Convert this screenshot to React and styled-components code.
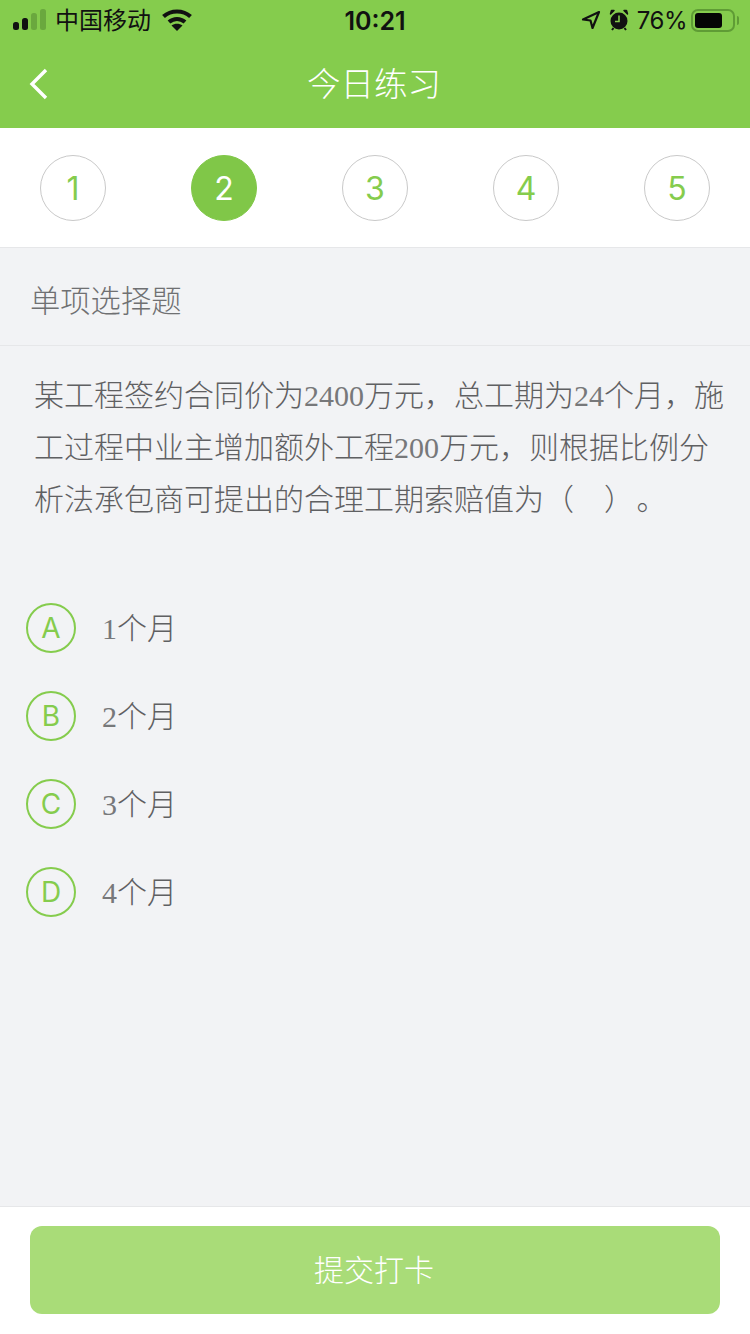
import React from 'react';
import styled, { createGlobalStyle } from 'styled-components';

const GlobalStyle = createGlobalStyle`
  html, body {
    margin: 0;
    padding: 0;
    background: #f2f3f5;
  }
  * {
    box-sizing: border-box;
  }
`;

const steps = [1, 2, 3, 4, 5];
const options = [
  { key: 'A', count: '1' },
  { key: 'B', count: '2' },
  { key: 'C', count: '3' },
  { key: 'D', count: '4' },
];

const SignalIcon = () => (
  <svg width="34" height="22" viewBox="0 0 34 22">
    <rect x="0" y="13" width="6" height="8" rx="2.500" fill="#111" />
    <rect x="9" y="9" width="6" height="12" rx="2.500" fill="#111" />
    <rect x="18" y="4" width="6" height="17" rx="2.500" fill="#6aa83e" />
    <rect x="27" y="0" width="6" height="21" rx="2.500" fill="#6aa83e" />
  </svg>
);

const WifiIcon = () => (
  <svg width="30" height="22" viewBox="0 0 30 22" fill="none" stroke="#111" strokeWidth="4.200">
    <path d="M1.500 7.500C9 .8 21 .8 28.500 7.500" />
    <path d="M7 13c4.700-4 11.300-4 16 0" />
    <path d="M15 22l-5.500-5.500c3.200-2.400 7.800-2.400 11 0z" fill="#111" stroke="none" />
  </svg>
);

const LocationIcon = () => (
  <svg width="20" height="20" viewBox="0 0 20 20" fill="none" stroke="#111" strokeWidth="2.200" strokeLinejoin="round">
    <path d="M18 2 2 9.500l7.500 1 2 7.500z" />
  </svg>
);

const AlarmIcon = () => (
  <svg width="20" height="22" viewBox="0 0 20 22">
    <circle cx="10" cy="12" r="8.500" fill="#111" />
    <path d="M1.500 5 5 1.500 2.500 1.500zM18.500 5 15 1.500 17.500 1.500z" fill="#111" stroke="#111" strokeWidth="1.500" strokeLinejoin="round" />
    <path d="M10 6.500V12.500H6" fill="none" stroke="#85cc4d" strokeWidth="1.600" />
    <path d="M4.500 19 3 21M15.500 19 17 21" stroke="#111" strokeWidth="2" />
  </svg>
);

const BackIcon = () => (
  <svg width="20" height="32" viewBox="0 0 20 32" fill="none" stroke="#fff" strokeWidth="3.400">
    <path d="M17 2 3 16l14 14" />
  </svg>
);

const App = () => {
  return (
    <Page>
      <GlobalStyle />
      <Header>
        <StatusBar>
          <StatusLeft>
            <SignalIcon />
            <Carrier>中国移动</Carrier>
            <WifiIcon />
          </StatusLeft>
          <Clock>10:21</Clock>
          <StatusRight>
            <LocationIcon />
            <AlarmIcon />
            <Percent>76%</Percent>
            <Battery>
              <BatteryLevel />
            </Battery>
          </StatusRight>
        </StatusBar>
        <NavBar>
          <BackButton>
            <BackIcon />
          </BackButton>
          <NavTitle>今日练习</NavTitle>
        </NavBar>
      </Header>

      <Steps>
        {steps.map((step) => (
          <Step key={step} $active={step === 2}>
            {step}
          </Step>
        ))}
      </Steps>

      <SectionTitle>单项选择题</SectionTitle>

      <Main>
        <Question>
          某工程签约合同价为<Num>2400</Num>万元，总工期为<Num>24</Num>个月，施工过程中业主增加额外工程<Num>200</Num>万元，则根据比例分析法承包商可提出的合理工期索赔值为（&nbsp;&nbsp;&nbsp;&nbsp;）<Num>&#8202;</Num>。
        </Question>
        <Options>
          {options.map((option) => (
            <Option key={option.key}>
              <OptionKey>{option.key}</OptionKey>
              <OptionText>
                <Num>{option.count}</Num>个月
              </OptionText>
            </Option>
          ))}
        </Options>
      </Main>

      <Footer>
        <SubmitButton type="button">提交打卡</SubmitButton>
      </Footer>
    </Page>
  );
};

const Page = styled.div`
  display: flex;
  flex-direction: column;
  width: 750px;
  height: 1334px;
  overflow: hidden;
  background: #f2f3f5;
  font-family: 'Liberation Sans', 'Noto Sans CJK SC', sans-serif;
`;

const Header = styled.header`
  flex: none;
  height: 128px;
  background: #85cc4d;
`;

const StatusBar = styled.div`
  display: grid;
  grid-template-columns: 1fr auto 1fr;
  align-items: center;
  height: 40px;
  padding: 0 13px;
  color: #111;
`;

const StatusLeft = styled.div`
  display: flex;
  align-items: center;
  gap: 8px;
`;

const Carrier = styled.span`
  margin-right: 3px;
  margin-bottom: 4px;
  font-size: 24px;
`;

const Clock = styled.span`
  margin-top: 2px;
  font-size: 25px;
  font-weight: 600;
  font-family: 'Inter', 'Liberation Sans', sans-serif;
`;

const StatusRight = styled.div`
  display: flex;
  align-items: center;
  justify-content: flex-end;
  gap: 8px;
`;

const Percent = styled.span`
  font-size: 24px;
  font-family: 'Inter', 'Liberation Sans', sans-serif;
  margin-right: -4px;
  letter-spacing: -0.5px;
`;

const Battery = styled.div`
  position: relative;
  width: 44px;
  height: 23px;
  margin-right: 2px;
  padding: 2px;
  border: 2px solid #5f9c35;
  border-radius: 7px;

  &::after {
    content: '';
    position: absolute;
    top: 5px;
    right: -6px;
    width: 2px;
    height: 9px;
    background: #5f9c35;
    border-radius: 0 2px 2px 0;
  }
`;

const BatteryLevel = styled.div`
  width: 76%;
  height: 100%;
  background: #050505;
  border-radius: 3px;
`;

const NavBar = styled.div`
  position: relative;
  display: flex;
  align-items: center;
  justify-content: center;
  height: 88px;
`;

const BackButton = styled.div`
  position: absolute;
  left: 29px;
  top: 28px;
  display: flex;
`;

const NavTitle = styled.h1`
  margin: 0 2px 5px 0;
  color: #fff;
  font-size: 33.5px;
  font-weight: 300;
  font-family: 'Noto Sans CJK SC', sans-serif;
`;

const Steps = styled.div`
  flex: none;
  display: flex;
  justify-content: space-between;
  align-items: flex-start;
  height: 120px;
  padding: 27px 40px 0;
  background: #fff;
  border-bottom: 1px solid #e6e7e9;
`;

const Step = styled.div`
  display: flex;
  align-items: center;
  justify-content: center;
  width: 66px;
  height: 66px;
  border-radius: 50%;
  font-family: 'Inter', 'Liberation Sans', sans-serif;
  font-size: 32px;
  font-weight: 400;
  color: ${({ $active }) => ($active ? '#fff' : '#85cc4d')};
  background: ${({ $active }) => ($active ? '#80c748' : '#fff')};
  border: 1px solid ${({ $active }) => ($active ? '#80c748' : '#c9c9c9')};
`;

const SectionTitle = styled.div`
  flex: none;
  display: flex;
  align-items: center;
  height: 98px;
  padding: 4px 0 0 30px;
  font-size: 30.300px;
  font-weight: 300;
  color: #6f7072;
  border-bottom: 1px solid #e6e7e9;
`;

const Main = styled.main`
  flex: 1;
  min-height: 0;
`;

const Question = styled.p`
  margin: 0;
  padding: 24px 24px 0 34px;
  font-family: 'Liberation Serif', 'Noto Sans CJK SC', serif;
  font-size: 30px;
  font-weight: 300;
  line-height: 52px;
  color: #5f6062;
`;

const Num = styled.span`
  font-weight: 400;
  color: #77787a;
`;

const Options = styled.div`
  display: flex;
  flex-direction: column;
  gap: 38px;
  padding: 77px 0 0 26px;
`;

const Option = styled.div`
  display: flex;
  align-items: center;
  gap: 26px;
`;

const OptionKey = styled.div`
  display: flex;
  align-items: center;
  justify-content: center;
  width: 50px;
  height: 50px;
  border: 2px solid #85cc4d;
  border-radius: 50%;
  font-family: 'Inter', 'Liberation Sans', sans-serif;
  font-size: 28px;
  font-weight: 400;
  color: #85cc4d;
`;

const OptionText = styled.span`
  padding-bottom: 5px;
  font-family: 'Liberation Serif', 'Noto Sans CJK SC', serif;
  font-size: 30px;
  font-weight: 300;
  color: #5f6062;
`;

const Footer = styled.footer`
  flex: none;
  height: 128px;
  padding: 19px 30px 0;
  background: #fff;
  border-top: 1px solid #e6e7e9;
`;

const SubmitButton = styled.button`
  display: block;
  width: 100%;
  height: 88px;
  padding: 0 2px 4px 0;
  border: none;
  border-radius: 12px;
  background: #a9dc78;
  color: #fff;
  font-family: 'Noto Sans CJK SC', sans-serif;
  font-size: 30px;
  font-weight: 300;
`;

export default App;
